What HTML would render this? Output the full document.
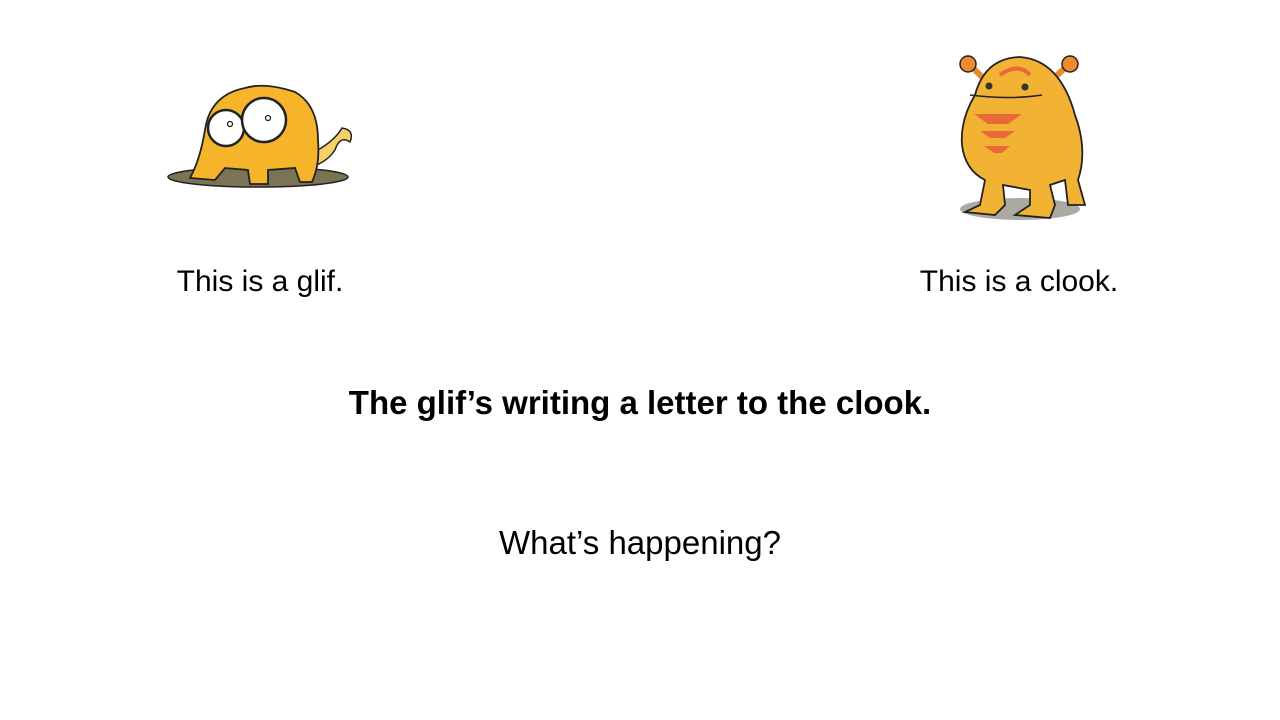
<!DOCTYPE html>
<html><head><style>
body{margin:0;width:1280px;height:720px;background:#fff;position:relative;overflow:hidden;font-family:"Liberation Sans",sans-serif;color:#000}
.t{position:absolute;font-size:30px;white-space:nowrap;transform:translateX(-50%)}
</style></head><body>
<svg width="1280" height="720" style="position:absolute;left:0;top:0">
<!-- glif -->
<ellipse cx="258" cy="177" rx="90" ry="10" fill="#7a7455" stroke="#222" stroke-width="1.5"/>
<path d="M318 150 Q335 140 342 128 Q355 130 350 142 Q340 135 335 150 Q325 165 305 168 Z" fill="#f6d068" stroke="#222" stroke-width="1.5"/>
<path d="M190 178 Q200 160 205 130 Q210 95 245 88 Q265 82 295 92 Q318 105 318 140 Q320 165 312 182 L300 182 L295 168 L268 170 L268 184 L250 184 L248 170 L225 168 L215 180 Z" fill="#f5b42a" stroke="#222" stroke-width="1.8"/>
<circle cx="226" cy="128" r="18" fill="#fff" stroke="#222" stroke-width="2.5"/>
<circle cx="264" cy="120" r="22" fill="#fff" stroke="#222" stroke-width="2.5"/>
<circle cx="230" cy="124" r="2.5" fill="#fff" stroke="#222" stroke-width="1.3"/>
<circle cx="268" cy="118" r="2.5" fill="#fff" stroke="#222" stroke-width="1.3"/>
<!-- clook -->
<ellipse cx="1020" cy="209" rx="60" ry="11" fill="#aaa9a4"/>
<path d="M985 80 L970 65 M1052 80 L1068 65" stroke="#e88a2a" stroke-width="6"/>
<circle cx="968" cy="64" r="8" fill="#f08a30" stroke="#222" stroke-width="1.5"/>
<circle cx="1070" cy="64" r="8" fill="#f08a30" stroke="#222" stroke-width="1.5"/>
<path d="M985 180 L980 205 L965 212 L995 215 L1005 205 L1003 185 L1030 190 L1030 205 L1015 215 L1050 218 L1055 205 L1050 185 L1065 180 L1068 205 L1085 205 L1078 180 Q1088 150 1075 115 Q1060 60 1020 57 Q985 58 975 95 Q960 120 962 145 Q965 170 985 180 Z" fill="#f2b233" stroke="#222" stroke-width="1.8"/>
<path d="M1000 75 Q1018 62 1030 75" stroke="#e86a3a" stroke-width="4" fill="none"/>
<circle cx="989" cy="86" r="3.5" fill="#333"/><circle cx="1025" cy="87" r="3.5" fill="#333"/>
<path d="M970 95 Q1010 100 1042 95" stroke="#222" stroke-width="1.5" fill="none"/>
<path d="M974 114 L1022 114 L1008 124 L988 124 Z M980 131 L1015 131 L1005 138 L990 138 Z M984 146 L1010 146 L1002 153 L994 153 Z" fill="#e86a3a"/>
</svg>
<div class="t" style="left:260px;top:265px">This is a glif.</div>
<div class="t" style="left:1019px;top:265px">This is a clook.</div>
<div class="t" style="left:640px;top:384px;font-weight:bold;font-size:33px">The glif’s writing a letter to the clook.</div>
<div class="t" style="left:640px;top:524px;font-size:33px">What’s happening?</div>
</body></html>
